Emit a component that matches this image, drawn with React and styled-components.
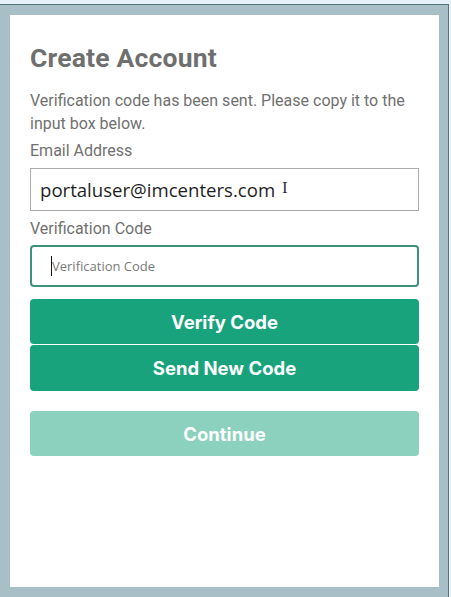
import React from "react";
import styled, { createGlobalStyle } from "styled-components";

////////////////////////////////////////////////////////////////////////////////////////////
// Estilos

const Global = createGlobalStyle`
  body {
    margin: 0;
    background-color: #e6f2f8;
    font-family: Roboto, "Liberation Sans", sans-serif;
  }
`;

const Frame = styled.div`
  box-sizing: border-box;
  width: 449px;
  height: 593px;
  margin-top: 4px;
  border-top: 1px solid #55737f;
  border-right: 1px solid #55737f;
  background-color: #a9bfc7;
  padding: 10px 9px 9px 10px;
`;

const Card = styled.div`
  box-sizing: border-box;
  background-color: #ffffff;
  height: 572px;
  padding: 25px 20px 0 20px;
  display: flex;
  flex-direction: column;
`;

const Title = styled.h1`
  margin: 0 0 13px 0;
  color: #6f6f6f;
  font-family: Roboto, "Liberation Sans", sans-serif;
  font-size: 26.5px;
  font-weight: 700;
  line-height: 36px;
  letter-spacing: 0.2px;
`;

const Text = styled.p`
  margin: 0;
  color: #707070;
  font-size: 16px;
  line-height: 23px;
`;

const Label = styled.label`
  display: block;
  margin: ${(p) => p.top}px 0 ${(p) => p.bottom}px 0;
  color: #707070;
  font-size: 16px;
  line-height: 20px;
`;

const Field = styled.div`
  box-sizing: border-box;
  height: ${(p) => (p.focused ? 42 : 43)}px;
  display: flex;
  align-items: center;
  border: ${(p) => (p.focused ? "2px solid #3f917f" : "1px solid #ababab")};
  border-radius: ${(p) => (p.focused ? 4 : 0)}px;
  padding-left: ${(p) => (p.focused ? 19 : 9)}px;
  position: relative;
`;

const Value = styled.span`
  color: #1e1e1e;
  font-family: "Open Sans", "Liberation Sans", sans-serif;
  font-size: 18.6px;
`;

const Placeholder = styled.span`
  color: #7a7a7a;
  font-family: "Open Sans", "Liberation Sans", sans-serif;
  font-size: 13px;
  border-left: 1px solid #111;
  line-height: 20px;
`;

const Cursor = styled.span`
  position: absolute;
  left: 251px;
  top: 9px;
  color: #333;
  font-family: "Liberation Serif", serif;
  font-size: 17px;
  font-weight: 300;
`;

const Button = styled.button`
  box-sizing: border-box;
  width: 100%;
  height: ${(p) => p.h || 45}px;
  margin-top: ${(p) => p.top || 0}px;
  border: none;
  border-radius: 4px;
  background-color: ${(p) => (p.disabled ? "#8bd1bd" : "#18a37d")};
  color: #ffffff;
  font-family: Inter, "Liberation Sans", sans-serif;
  font-size: 18.5px;
  font-weight: 700;
  cursor: pointer;
`;

////////////////////////////////////////////////////////////////////////////////////////////

export default function App() {
  return (
    <>
      <Global />
      <Frame>
        <Card>
          <Title>Create Account</Title>
          <Text>
            Verification code has been sent. Please copy it to the input box
            below.
          </Text>
          <Label top={6} bottom={7}>Email Address</Label>
          <Field>
            <Value>portaluser@imcenters.com</Value>
            <Cursor>I</Cursor>
          </Field>
          <Label top={8} bottom={6}>Verification Code</Label>
          <Field focused>
            <Placeholder>Verification Code</Placeholder>
          </Field>
          <Button top={12} h={45}>Verify Code</Button>
          <Button top={1} h={46}>Send New Code</Button>
          <Button top={20} disabled>
            Continue
          </Button>
        </Card>
      </Frame>
    </>
  );
}
